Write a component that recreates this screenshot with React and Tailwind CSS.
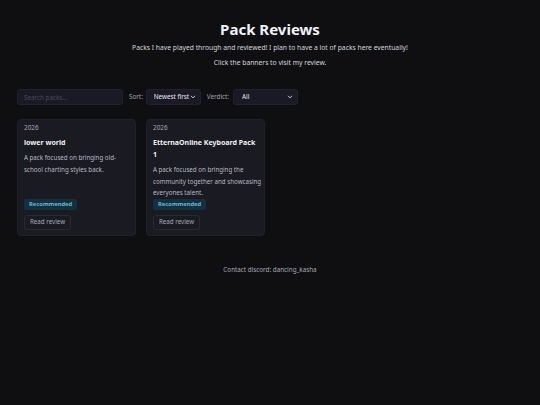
import { useState } from "react";

const packs = [
  {
    year: "2026",
    title: "lower world",
    description: "A pack focused on bringing old-school charting styles back.",
    verdict: "Recommended",
  },
  {
    year: "2026",
    title: "EtternaOnline Keyboard Pack 1",
    description:
      "A pack focused on bringing the community together and showcasing everyones talent.",
    verdict: "Recommended",
  },
];

function Chevron() {
  return (
    <svg width="6" height="6" viewBox="0 0 10 10" className="pointer-events-none absolute right-[5px] top-1/2 -translate-y-1/2">
      <path d="M2 3.5 L5 6.5 L8 3.5" fill="none" stroke="#d0d0d8" strokeWidth="1.6" strokeLinecap="round" strokeLinejoin="round" />
    </svg>
  );
}

function PackCard({ pack }) {
  return (
    <div className="flex flex-col rounded-[4px] border border-[#20202a] bg-[#1a1a22] pl-[6px] pr-[2px] pt-[4px] pb-[5px]">
      <div className="text-[6.4px] leading-[8px] text-[#a8a8b4]">{pack.year}</div>
      <h2 className="mt-[5px] pr-[3px] text-[7px] font-bold leading-[12px] text-[#f0f0f4]">{pack.title}</h2>
      <p className="mt-[3px] text-[6.2px] leading-[11.5px] text-[#b8b8c4]">{pack.description}</p>
      <div className="mt-auto flex">
        <span className="rounded-[2px] bg-[#14303e] px-[5px] text-[5.8px] font-bold leading-[11px] text-[#6ab6d8]">
          {pack.verdict}
        </span>
      </div>
      <div className="mt-[5px] flex">
        <button className="h-[15px] rounded-[3px] border border-[#2a2a34] px-[5px] text-[6.2px] leading-[8px] text-[#a8a8b4]">
          Read review
        </button>
      </div>
    </div>
  );
}

export default function App() {
  const [search, setSearch] = useState("");
  const [sort, setSort] = useState("newest");
  const [verdict, setVerdict] = useState("all");

  return (
    <div className="min-h-[405px] w-full bg-[#0f0f12] px-[17px] pt-[19px] font-['Noto_Sans',sans-serif] text-[#e8e8ee]">
      <header className="flex flex-col items-center">
        <h1 className="text-[15px] font-bold leading-[20px] text-[#f2f2f6]">Pack Reviews</h1>
        <p className="mt-[4px] text-[6.75px] leading-[10px] text-[#d4d4dc]">
          Packs I have played through and reviewed! I plan to have a lot of packs here eventually!
        </p>
        <p className="mt-[5px] text-[6.75px] leading-[10px] text-[#d4d4dc]">Click the banners to visit my review.</p>
      </header>

      <div className="mt-[21px] flex h-[16px] items-center">
        <input
          value={search}
          onChange={(e) => setSearch(e.target.value)}
          placeholder="Search packs..."
          className="h-[16px] w-[106px] rounded-[3px] border border-[#22222e] bg-[#1a1a26] px-[6px] text-[6.3px] text-[#e0e0e8] outline-none placeholder:text-[#4a4a5a]"
        />
        <span className="ml-[6px] text-[6.3px] leading-[8px] text-[#a0a0ac]">Sort:</span>
        <div className="relative ml-[3px] flex">
          <select
            value={sort}
            onChange={(e) => setSort(e.target.value)}
            className="h-[16px] w-[55px] appearance-none rounded-[3px] border border-[#22222e] bg-[#1a1a26] pl-[7px] text-[6.3px] leading-[8px] text-[#e8e8ee] outline-none"
          >
            <option value="newest">Newest first</option>
            <option value="oldest">Oldest first</option>
          </select>
          <Chevron />
        </div>
        <span className="ml-[6px] text-[6.3px] leading-[8px] text-[#a0a0ac]">Verdict:</span>
        <div className="relative ml-[4px] flex">
          <select
            value={verdict}
            onChange={(e) => setVerdict(e.target.value)}
            className="h-[16px] w-[65px] appearance-none rounded-[3px] border border-[#22222e] bg-[#1a1a26] pl-[8px] text-[6.3px] leading-[8px] text-[#e8e8ee] outline-none"
          >
            <option value="all">All</option>
            <option value="recommended">Recommended</option>
          </select>
          <Chevron />
        </div>
      </div>

      <div className="mt-[14px] grid grid-cols-[119px_119px] gap-[10px]">
        {packs.map((pack) => (
          <PackCard key={pack.title} pack={pack} />
        ))}
      </div>

      <footer className="mt-[29px] text-center text-[6.3px] leading-[10px] text-[#a8a8b4]">Contact discord: dancing_kasha</footer>
    </div>
  );
}
